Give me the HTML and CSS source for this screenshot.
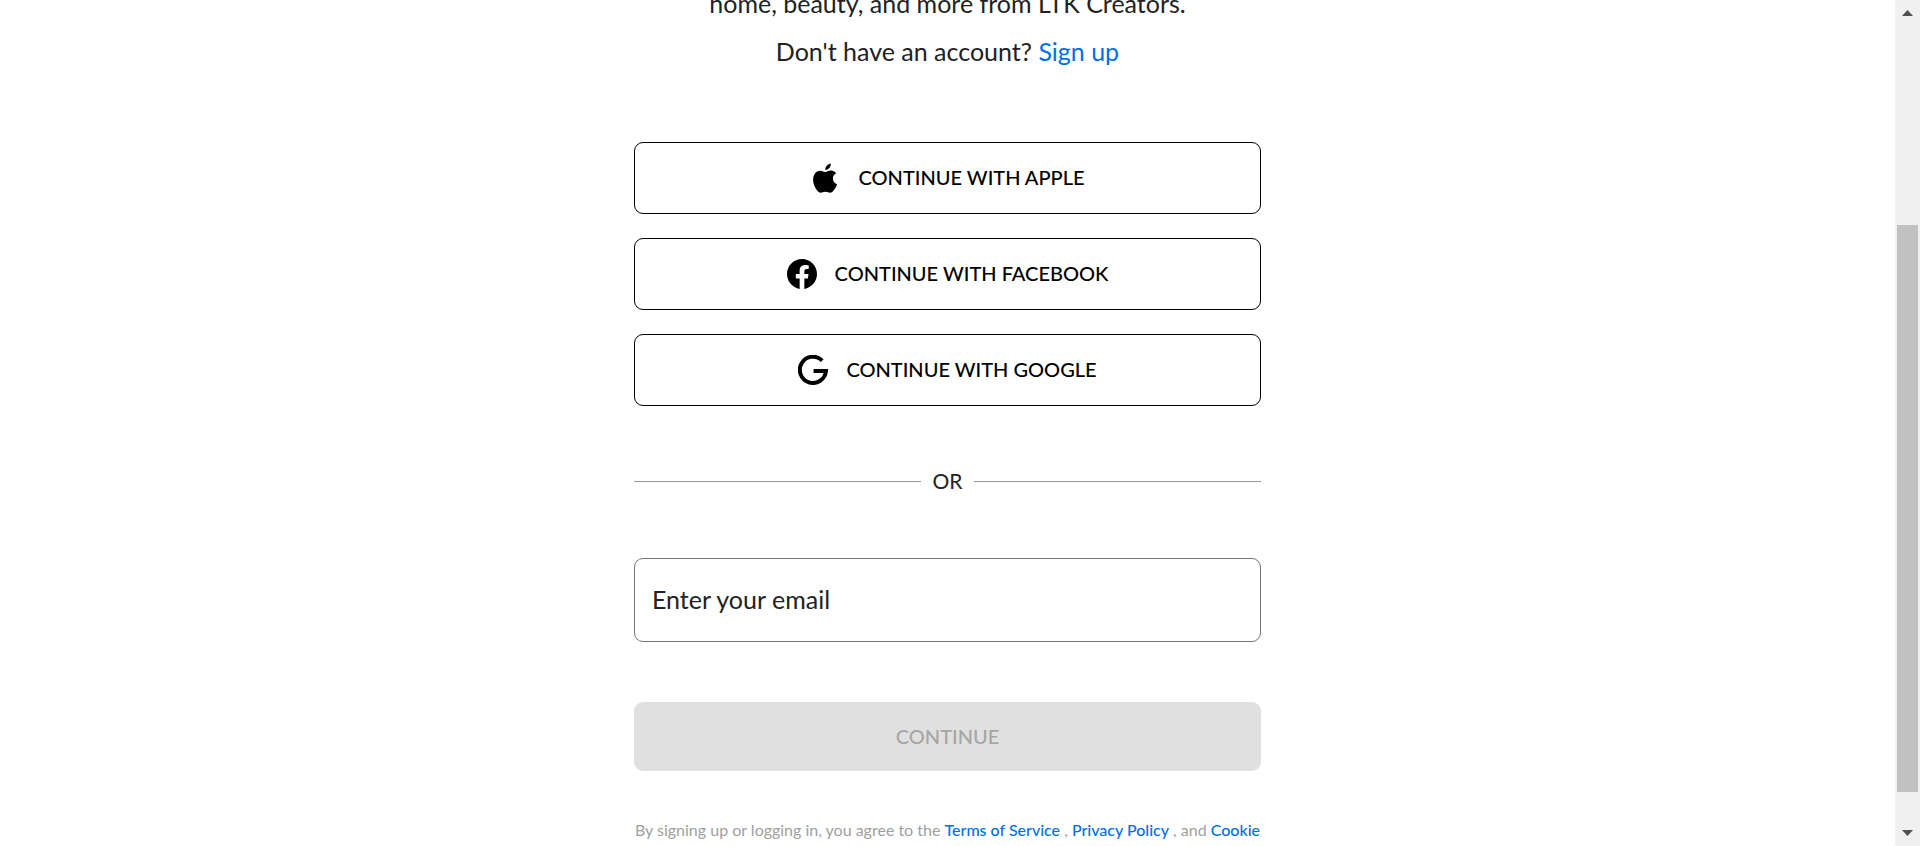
FILE: index.html
```html
<!DOCTYPE html>
<html lang="en">
<head>
<meta charset="utf-8">
<meta name="viewport" content="width=device-width, initial-scale=1">
<title>Log in</title>
<link rel="stylesheet" href="styles.css">
</head>
<body>
<div class="viewport">
  <main class="page">
    <div class="login">
      <div class="intro">
        <p class="intro-line">home, beauty, and more from LTK Creators.</p>
        <p class="intro-line">Don't have an account? <a class="link" href="#signup">Sign up</a></p>
      </div>
      <div class="providers">
        <button class="provider" type="button">
          <svg class="icon" viewBox="0 0 30 30" aria-hidden="true"><path d="M20.8 0.4C21 2.5 20.2 4 19 5.300C17.900 6.500 16.500 7 15.200 6.900C15.100 5 15.900 3.500 17 2.400C18 1.300 19.500 0.600 20.800 0.400ZM26.100 10.200C24 11.500 22.900 13.200 22.900 15.500C22.900 18.200 24.400 20.200 27 21.200C26.200 23.900 24.800 26.200 23.200 28C22.200 29.100 21.300 29.700 20.200 29.700C18.300 29.700 17.600 28.700 15.400 28.700C13.100 28.700 12.200 29.700 10.500 29.700C9.300 29.700 8.300 28.900 7.200 27.600C4.800 24.800 3.100 20.800 3.100 16.800C3.100 11.500 6 7.700 10.300 7.700C12.400 7.700 13.900 9 15.200 9C16.600 9 18.300 7.600 20.800 7.600C23 7.600 24.800 8.500 26.100 10.200Z"/></svg>
          <span class="provider-name">CONTINUE WITH APPLE</span>
        </button>
        <button class="provider" type="button">
          <svg class="icon" viewBox="0 0 24 24" aria-hidden="true"><path d="M24 12.073c0-6.627-5.373-12-12-12s-12 5.373-12 12c0 5.990 4.388 10.954 10.125 11.854v-8.385H7.078v-3.470h3.047V9.430c0-3.007 1.792-4.669 4.533-4.669 1.312 0 2.686.235 2.686.235v2.953H15.830c-1.491 0-1.956.925-1.956 1.874v2.250h3.328l-.532 3.470h-2.796v8.385C19.612 23.027 24 18.062 24 12.073z"/></svg>
          <span class="provider-name">CONTINUE WITH FACEBOOK</span>
        </button>
        <button class="provider" type="button">
          <svg class="icon" viewBox="0 0 30 30" aria-hidden="true"><path class="icon-stroke" d="M24.200 5.600A13.100 13.100 0 1 0 28 15.900H15.600"/></svg>
          <span class="provider-name">CONTINUE WITH GOOGLE</span>
        </button>
      </div>
      <div class="divider"><span>OR</span></div>
      <form class="form">
        <input class="email" type="email" placeholder="Enter your email" aria-label="Enter your email">
        <button class="submit" type="submit" disabled>CONTINUE</button>
      </form>
      <p class="legal">By signing up or logging in, you agree to the <a class="link" href="#terms">Terms of Service</a> , <a class="link" href="#privacy">Privacy Policy</a> , and <a class="link" href="#cookies">Cookie</a></p>
    </div>
  </main>
  <div class="scrollbar" aria-hidden="true">
    <svg class="arrow" viewBox="0 0 25 25"><path d="M7 16L12.500 10L18 16Z"/></svg>
    <div class="track"><div class="thumb"></div></div>
    <svg class="arrow" viewBox="0 0 25 25"><path d="M7 9L12.500 15L18 9Z"/></svg>
  </div>
</div>
</body>
</html>
```
FILE: styles.css
```css
* { box-sizing: border-box; }
body {
  margin: 0;
  background: #fff;
  color: #222;
  font-family: Lato, "Open Sans", sans-serif;
}
.viewport { display: flex; height: 100vh; overflow: hidden; }
.page { flex: 1; min-width: 0; overflow: hidden; padding: 0 16px; }
.login { max-width: 627px; margin: 0 auto; }
.intro { margin-top: -21px; text-align: center; font-size: 25px; line-height: 48px; }
.intro-line { margin: 0; white-space: nowrap; }
.link { color: #0070e8; text-decoration: none; }
.providers { display: grid; gap: 24px; margin-top: 67px; }
.provider {
  display: flex;
  align-items: center;
  justify-content: center;
  gap: 18px;
  height: 72px;
  padding: 0;
  border: 1px solid #000;
  border-radius: 9px;
  background: #fff;
  color: #000;
  font: 500 20px Lato, "Open Sans", sans-serif;
}
.provider-name { padding-bottom: 2px; }
.icon { width: 30px; height: 30px; fill: #000; }
.icon-stroke { fill: none; stroke: #000; stroke-width: 4; }
.divider {
  display: flex;
  align-items: center;
  gap: 12px;
  margin: 59px 0 61px;
  font-size: 21px;
  line-height: 32px;
}
.divider::before, .divider::after {
  content: "";
  flex: 1;
  height: 1px;
  background: #999;
}
.form { display: grid; gap: 60px; }
.email {
  width: 100%;
  height: 84px;
  padding: 0 17px 2px;
  border: 1px solid #757575;
  border-radius: 9px;
  background: #fff;
  color: #222;
  font: 25px Lato, "Open Sans", sans-serif;
}
.email::placeholder { color: #222; opacity: 1; }
.submit {
  height: 69px;
  padding: 0 0 2px;
  border: 0;
  border-radius: 9px;
  background: #e0e0e0;
  color: #a6a6a6;
  font: 500 20px Lato, "Open Sans", sans-serif;
}
.legal {
  margin: 47px 0 0;
  text-align: center;
  color: #a0a0a0;
  font-size: 16px;
  line-height: 24px;
}
.legal .link { font-weight: 500; }
.scrollbar { display: flex; flex-direction: column; width: 25px; background: #f0f0f0; }
.arrow { width: 25px; height: 25px; fill: #505050; }
.track { flex: 1; display: flex; flex-direction: column; padding: 0 2px; }
.track::before { content: ""; flex: 200; }
.track::after { content: ""; flex: 29; }
.thumb { flex: 567; background: #c1c1c1; }
```
